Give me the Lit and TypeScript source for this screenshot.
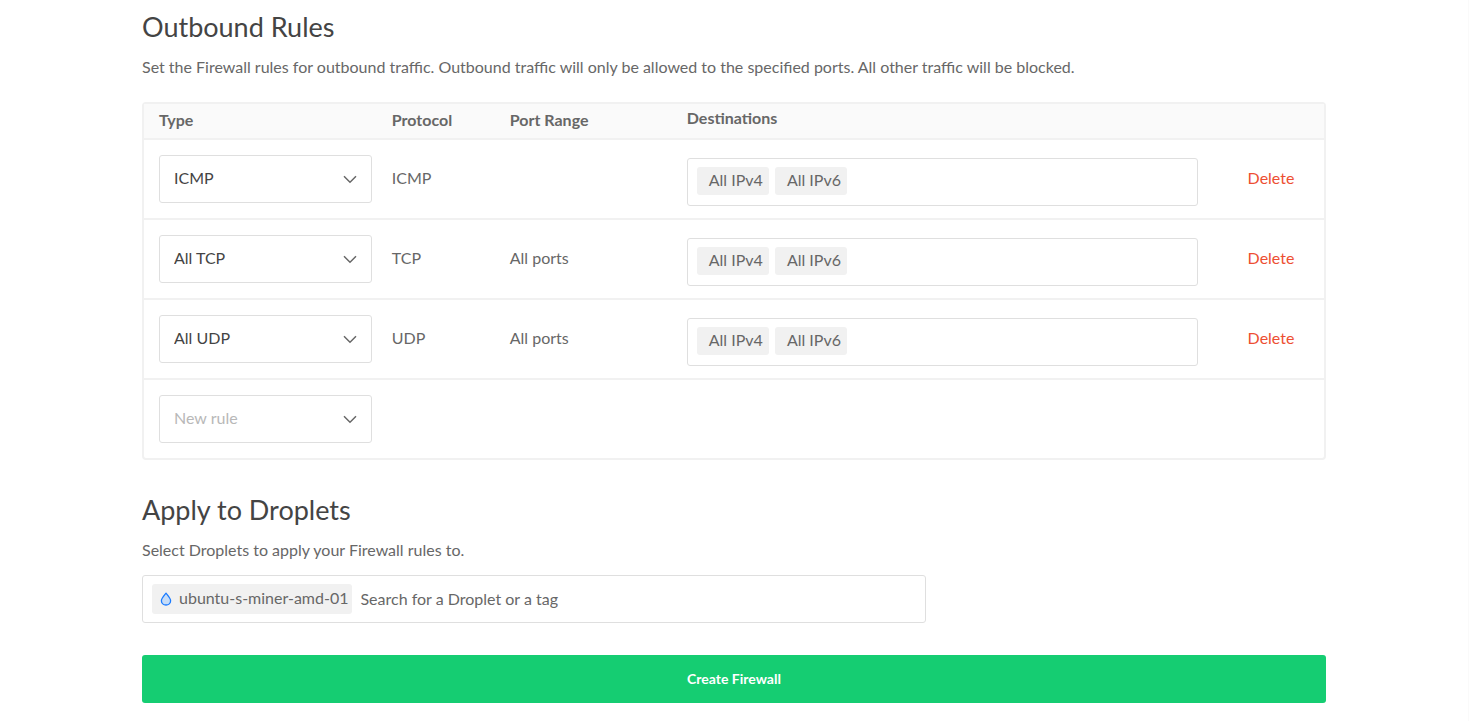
import { LitElement, html, css } from "lit";
import { customElement, state } from "lit/decorators.js";

interface Rule {
  type: string;
  protocol: string;
  ports: string;
  destinations: string[];
}

const RULE_TYPES = ["ICMP", "All TCP", "All UDP"];

@customElement("app-root")
export class AppRoot extends LitElement {
  @state() private rules: Rule[] = [
    { type: "ICMP", protocol: "ICMP", ports: "", destinations: ["All IPv4", "All IPv6"] },
    { type: "All TCP", protocol: "TCP", ports: "All ports", destinations: ["All IPv4", "All IPv6"] },
    { type: "All UDP", protocol: "UDP", ports: "All ports", destinations: ["All IPv4", "All IPv6"] },
  ];

  static styles = css`
    :host {
      display: block;
      box-sizing: border-box;
      min-height: 100vh;
      border-right: 1px solid #fafafa;
      background: #fff;
      color: #676767;
      font: 16px/24px Lato, "Open Sans", sans-serif;
    }
    *, *::before, *::after { box-sizing: border-box; }
    .page { max-width: 1184px; margin: 0 auto; padding: 9px 0 16px; }
    h2 { margin: 0; color: #444; font-size: 27px; line-height: 36px; font-weight: 400; }
    .intro { margin: 10px 0 0; }
    .rules {
      width: 100%;
      margin-top: 23px;
      table-layout: fixed;
      border: 2px solid #f1f1f1;
      border-radius: 4px;
      border-spacing: 0;
    }
    .col-type { width: 21%; }
    .col-protocol { width: 10%; }
    .col-ports { width: 15%; }
    .col-action { width: 126px; }
    th {
      height: 36px;
      padding: 0 0 2px;
      border-bottom: 2px solid #f1f1f1;
      background: #fafafa;
      text-align: left;
      font-weight: 700;
      line-height: 24px;
    }
    th.high { padding-bottom: 6px; }
    td { height: 80px; padding: 0 0 2px; border-bottom: 2px solid #f1f1f1; }
    tbody tr:last-child td { height: 78px; border-bottom: 0; }
    th:first-child, td:first-child { padding-left: 15px; padding-right: 20px; }
    td:first-child { padding-bottom: 0; }
    td.boxed { padding-top: 6px; padding-bottom: 0; }
    td.action { text-align: center; padding-left: 20px; }
    .picker { position: relative; display: block; }
    .picker svg { position: absolute; right: 15px; top: 20px; pointer-events: none; }
    select {
      appearance: none;
      display: block;
      width: 100%;
      height: 48px;
      padding: 0 36px 2px 14px;
      border: 1px solid #dfdfdf;
      border-radius: 3px;
      background: #fff;
      color: #444;
      font: inherit;
    }
    select.empty { color: #b8b8b8; }
    .tokens {
      display: flex;
      align-items: center;
      height: 48px;
      padding: 0 9px;
      border: 1px solid #dfdfdf;
      border-radius: 3px;
      background: #fff;
    }
    .tokens.dest { gap: 6px; padding-bottom: 2px; }
    .token {
      display: flex;
      align-items: center;
      height: 28px;
      padding: 0 6px 2px 12px;
      border-radius: 3px;
      background: #f1f1f1;
      white-space: nowrap;
    }
    .token.droplet { height: 30px; padding: 0 4px 2px 8px; gap: 7px; }
    .token svg { flex: none; margin-top: 2px; }
    .tokens input {
      flex: 1;
      min-width: 0;
      height: 30px;
      padding: 0 0 2px;
      border: 0;
      outline: 0;
      background: transparent;
      color: #676767;
      font: inherit;
    }
    .search { width: 66.2%; margin-top: 13px; }
    .search input { margin-left: 8px; }
    .search input::placeholder { color: #676767; opacity: 1; }
    .delete {
      padding: 0;
      border: 0;
      background: none;
      color: #ed4f32;
      font: inherit;
      cursor: pointer;
    }
    .apply { margin-top: 32px; }
    .create {
      display: block;
      width: 100%;
      height: 48px;
      margin-top: 32px;
      border: 0;
      border-radius: 3px;
      background: #15cd72;
      color: #fff;
      font: 700 14px/24px Lato, "Open Sans", sans-serif;
      cursor: pointer;
    }
  `;

  private chevron() {
    return html`<svg width="14" height="9" viewBox="0 0 14 9" aria-hidden="true">
      <path d="M1 1.2 7 7.2 13 1.2" fill="none" stroke="#676767" stroke-width="1.5" />
    </svg>`;
  }

  private picker(value: string) {
    return html`<label class="picker">
      <select class=${value ? "" : "empty"} aria-label="Rule type">
        ${value ? "" : html`<option value="" selected>New rule</option>`}
        ${RULE_TYPES.map((t) => html`<option ?selected=${t === value}>${t}</option>`)}
      </select>
      ${this.chevron()}
    </label>`;
  }

  private remove(rule: Rule) {
    this.rules = this.rules.filter((r) => r !== rule);
  }

  render() {
    return html`<main class="page">
      <section>
        <h2>Outbound Rules</h2>
        <p class="intro">
          Set the Firewall rules for outbound traffic. Outbound traffic will only be allowed to the
          specified ports. All other traffic will be blocked.
        </p>
        <table class="rules">
          <colgroup>
            <col class="col-type" /><col class="col-protocol" /><col class="col-ports" />
            <col /><col class="col-action" />
          </colgroup>
          <thead>
            <tr>
              <th scope="col">Type</th>
              <th scope="col">Protocol</th>
              <th scope="col">Port Range</th>
              <th scope="col" class="high">Destinations</th>
              <th></th>
            </tr>
          </thead>
          <tbody>
            ${this.rules.map(
              (rule) => html`<tr>
                <td>${this.picker(rule.type)}</td>
                <td>${rule.protocol}</td>
                <td>${rule.ports}</td>
                <td class="boxed">
                  <div class="tokens dest">
                    ${rule.destinations.map((d) => html`<span class="token">${d}</span>`)}
                    <input type="text" aria-label="Add destination" />
                  </div>
                </td>
                <td class="action">
                  <button class="delete" type="button" @click=${() => this.remove(rule)}>Delete</button>
                </td>
              </tr>`
            )}
            <tr>
              <td>${this.picker("")}</td>
              <td colspan="4"></td>
            </tr>
          </tbody>
        </table>
      </section>
      <section class="apply">
        <h2>Apply to Droplets</h2>
        <p class="intro">Select Droplets to apply your Firewall rules to.</p>
        <div class="tokens search">
          <span class="token droplet">
            <svg width="12" height="14" viewBox="0 0 12 14" aria-hidden="true">
              <path d="M6 1.2C5.2 2.4 1.4 6 1.4 8.7a4.6 4.3 0 0 0 9.2 0C10.6 6 6.8 2.4 6 1.2Z"
                fill="#c6dcf7" stroke="#1b7bff" stroke-width="1.3" stroke-linejoin="round" />
            </svg>
            ubuntu-s-miner-amd-01
          </span>
          <input type="text" placeholder="Search for a Droplet or a tag" aria-label="Search for a Droplet or a tag" />
        </div>
      </section>
      <button class="create" type="button">Create Firewall</button>
    </main>`;
  }
}
